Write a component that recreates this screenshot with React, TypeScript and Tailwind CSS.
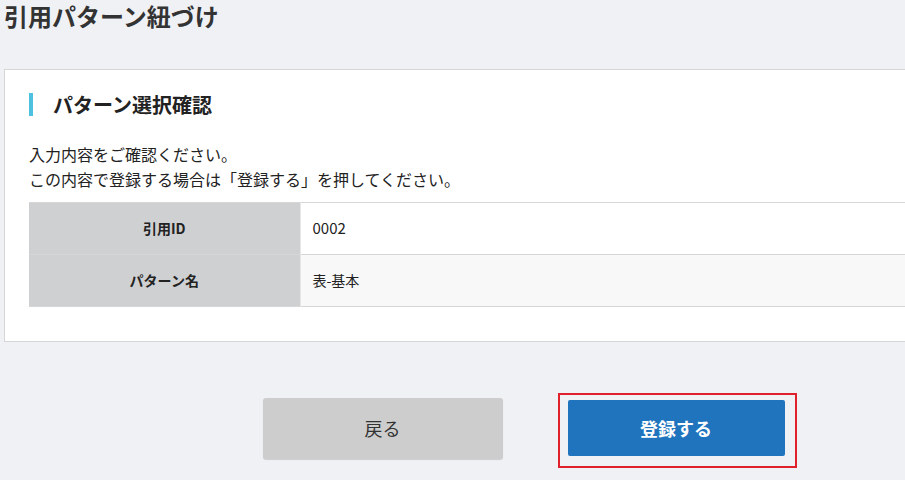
import React from "react";

const rows = [
  { label: "引用ID", value: "0002" },
  { label: "パターン名", value: "表-基本" },
];

const App = () => {
  return (
    <div
      className="w-[905px] h-[480px] overflow-hidden bg-[#f0f1f5] text-[#333]"
      style={{ fontFamily: '"Noto Sans CJK JP", "Noto Sans", sans-serif' }}
    >
      <div className="w-[1055px] pl-[4px]">
        <h1 className="text-[24px] leading-[32px] font-bold text-[#333]">
          引用パターン紐づけ
        </h1>

        <div className="mt-[37px] h-[273px] bg-white border border-[#d6d6d6] pl-[24px] pt-[23px]">
          <h2 className="border-l-4 border-[#4ec1e0] pl-[20px] text-[20px] leading-[23px] font-bold text-[#222]">
            パターン選択確認
          </h2>

          <div className="mt-[26px] text-[16px] leading-[25px] text-[#222]">
            <p>入力内容をご確認ください。</p>
            <p>この内容で登録する場合は「登録する」を押してください。</p>
          </div>

          <table className="mt-[10px] w-full border-collapse text-[14px]">
            <tbody>
              {rows.map((r, i) => (
                <tr key={r.label} className="h-[52px] border-y border-[#d6d6d6]">
                  <th className="w-[271px] bg-[#cfd0d2] font-bold text-center text-[#222] border-r border-[#e6e6e6]">
                    {r.label}
                  </th>
                  <td
                    className={
                      i === 1
                        ? "bg-[#f8f8f8] pl-[12px] text-[#222]"
                        : "bg-white pl-[12px] text-[15px] text-[#222]"
                    }
                  >
                    {r.value}
                  </td>
                </tr>
              ))}
            </tbody>
          </table>
        </div>

        <div className="mt-[47px] flex items-center justify-center gap-[55px]">
          <button className="w-[240px] h-[61px] rounded-[3px] bg-[#cdcdcd] text-[18px] text-[#333] shadow-[0_1px_1px_rgba(0,0,0,0.15)]">
            戻る
          </button>
          <div className="mt-[4px] border-2 border-[#e0202a] pt-[5px] pb-[10px] pl-[8px] pr-[10px]">
            <button className="w-[217px] h-[56px] rounded-[2px] bg-[#1f74bd] text-[18px] font-bold text-white">
              登録する
            </button>
          </div>
        </div>
      </div>
    </div>
  );
};

export default App;
